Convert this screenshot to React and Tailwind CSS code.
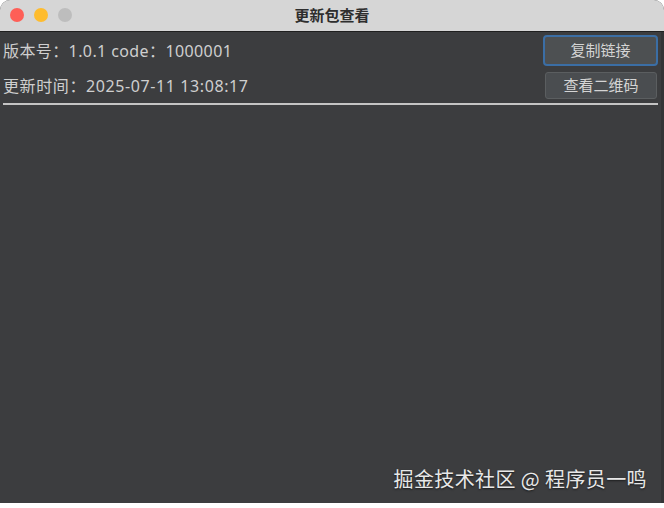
import React from 'react';

const font = { fontFamily: '"Noto Sans", "Noto Sans CJK SC", sans-serif' };
const cjk = { fontFamily: '"Noto Sans CJK SC", sans-serif' };

const App = () => {
  return (
    <div className="w-[664px] h-[508px] bg-white overflow-hidden" style={font}>
      <div className="flex h-[503px] flex-col rounded-t-[10px] overflow-hidden bg-[#3c3d3f]">
        {/* title bar */}
        <div className="relative flex h-[32px] shrink-0 items-center justify-center border-b border-[#1f1f1f] bg-[#d6d6d6]">
          <div className="absolute left-[10px] top-[8px] flex gap-[10px]">
            <span className="h-[14px] w-[14px] rounded-full bg-[#fe5f57]" />
            <span className="h-[14px] w-[14px] rounded-full bg-[#febc2e]" />
            <span className="h-[14px] w-[14px] rounded-full bg-[#bdbdbd]" />
          </div>
          <span className="text-[15px] font-bold text-[#2e2e2e]" style={cjk}>更新包查看</span>
        </div>

        {/* info rows */}
        <div className="flex flex-1 flex-col border-r-[3px] border-[#333436]">
          <div className="flex items-center justify-between pl-[3px] pr-[3px] pt-[3px]">
            <span className="text-[16px] tracking-[0.4px] text-[#cfcfcf]">版本号：1.0.1 code：1000001</span>
            <button
              type="button"
              className="flex h-[31px] w-[115px] items-center justify-center rounded-[4px] border-2 border-[#3b6ea5] bg-[#4d5052] text-[15px] text-[#d4d4d4]"
              style={cjk}
            >
              复制链接
            </button>
          </div>
          <div className="flex items-center justify-between pl-[3px] pr-[4px] pt-[6px]">
            <span className="text-[16px] tracking-[0.6px] text-[#cfcfcf]">更新时间：2025-07-11 13:08:17</span>
            <button
              type="button"
              className="flex h-[27px] w-[112px] items-center justify-center rounded-[3px] border border-[#5b5e60] bg-[#4a4d50] text-[15px] text-[#d4d4d4]"
              style={cjk}
            >
              查看二维码
            </button>
          </div>
          <div className="mx-[3px] mt-[4px] h-[2px] bg-[#c4c4c4]" />

          <div className="flex flex-1 items-end justify-end pb-[9px] pr-[14px]">
            <span className="text-[20px] tracking-[0.4px] text-[#e8e8e8] [text-shadow:0_1px_2px_rgba(0,0,0,0.6)]" style={cjk}>
              掘金技术社区 @ 程序员一鸣
            </span>
          </div>
        </div>
      </div>
    </div>
  );
};

export default App;
